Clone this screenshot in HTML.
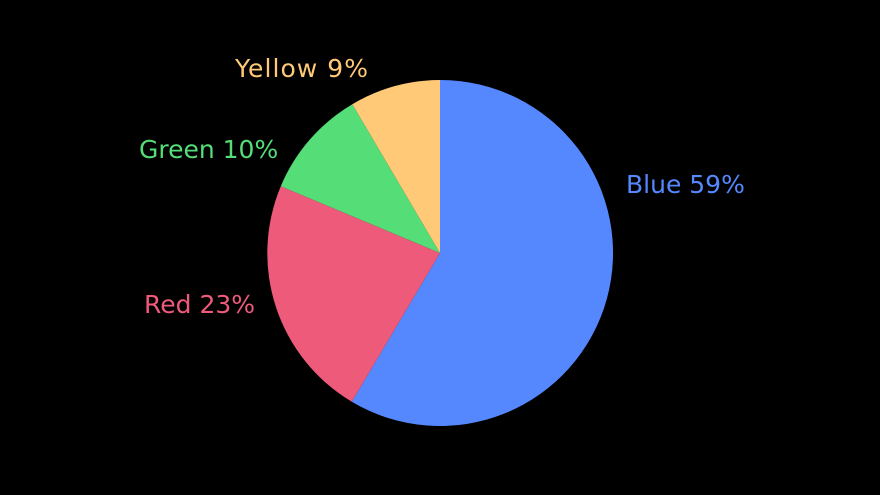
<!DOCTYPE html>
<html>
<head>
<meta charset="utf-8">
<style>
html,body{margin:0;padding:0;background:#000;width:880px;height:495px;overflow:hidden}
svg text{font-family:"DejaVu Sans","Liberation Sans",sans-serif;font-size:25px}
</style>
</head>
<body>
<svg width="880" height="495" viewBox="0 0 880 495" xmlns="http://www.w3.org/2000/svg">
<rect width="880" height="495" fill="#000"/>
<path d="M440 253 L440 80 A173 173 0 1 1 351.8 401.8 Z" fill="#5588ff"/>
<path d="M440 253 L351.8 401.8 A173 173 0 0 1 280.8 186.2 Z" fill="#ee5a7a"/>
<path d="M440 253 L280.8 186.2 A173 173 0 0 1 352.3 104.2 Z" fill="#55dd77"/>
<path d="M440 253 L352.3 104.2 A173 173 0 0 1 440 80 Z" fill="#ffc977"/>
<text x="626" y="193" fill="#5588ff">Blue 59%</text>
<text x="144" y="313" fill="#ee5a7a">Red 23%</text>
<text x="139" y="158" fill="#55dd77">Green 10%</text>
<text x="235" y="77" fill="#ffc977" textLength="133">Yellow 9%</text>
</svg>
</body>
</html>
